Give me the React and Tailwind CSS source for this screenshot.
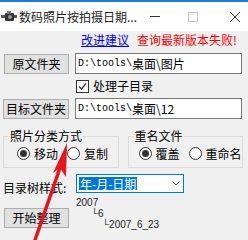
import React from 'react'

const Radio = ({ checked, label }) => (
  <div className="flex items-center gap-[4px]">
    <span className="w-[13px] h-[13px] rounded-full border border-[#333] bg-white flex items-center justify-center">
      {checked && <span className="w-[7px] h-[7px] rounded-full bg-[#333]" />}
    </span>
    <span>{label}</span>
  </div>
)

const Btn = ({ children, className = '' }) => (
  <div className={`h-[20px] bg-[#e1e1e1] border border-[#adadad] flex items-center justify-center ${className}`}>
    {children}
  </div>
)

const PathBox = ({ prefix, rest }) => (
  <div className="h-[21px] flex-1 bg-white border border-[#7a7a7a] flex items-center pl-[2px]">
    <span className="font-['Liberation_Mono',monospace] text-[10px]">{prefix}</span>
    <span>{rest}</span>
  </div>
)

export default function App() {
  return (
    <div className="w-[248px] h-[240px] relative overflow-hidden bg-[#f0f0f0] text-[12px] text-black font-['Noto_Sans_CJK_SC',sans-serif] leading-none">

      {/* title bar */}
      <div className="h-[31px] bg-white border-t-2 border-[#1a7fd4] flex items-center">
        <svg width="16" height="12" viewBox="0 0 16 12" className="ml-[1px] mr-[2px]">
          <rect x="0" y="4" width="4" height="3" fill="#555" />
          <rect x="4" y="2" width="9" height="8" rx="1" fill="#333" />
          <rect x="6" y="0" width="4" height="3" fill="#777" />
          <circle cx="9" cy="6" r="2" fill="#999" />
          <rect x="13" y="4" width="3" height="3" fill="#555" />
        </svg>
        <span className="text-[12px] text-[#222]">数码照片按拍摄日期...</span>
        <span className="ml-auto w-[10px] h-px bg-[#333] mr-[28px]" />
        <span className="w-[10px] h-[10px] border border-[#c8c8c8] mr-[32px]" />
        <svg width="10" height="10" viewBox="0 0 10 10" className="mr-[8px]">
          <path d="M0 0 L10 10 M10 0 L0 10" stroke="#333" strokeWidth="1" />
        </svg>
      </div>

      {/* links */}
      <div className="flex justify-end gap-[8px] pr-[11px] mt-[3px] h-[12px]">
        <span className="text-[#0000ff] underline">改进建议</span>
        <span className="text-[#ff0000]">查询最新版本失败!</span>
      </div>

      {/* source */}
      <div className="flex items-center pl-[4px] pr-[6px] mt-[7px] gap-[6px]">
        <Btn className="w-[65px]">原文件夹</Btn>
        <PathBox prefix="D:\tools\" rest="桌面\图片" />
      </div>

      {/* checkbox */}
      <div className="flex items-center pl-[76px] mt-[5px] gap-[4px] h-[14px]">
        <span className="w-[13px] h-[13px] border border-[#333] bg-white flex items-center justify-center">
          <svg width="9" height="9" viewBox="0 0 9 9">
            <path d="M1 4.5 L3.5 7 L8 1.5" stroke="#333" strokeWidth="1.2" fill="none" />
          </svg>
        </span>
        <span>处理子目录</span>
      </div>

      {/* target */}
      <div className="flex items-center pl-[3px] pr-[6px] mt-[5px] gap-[6px]">
        <Btn className="w-[66px]">目标文件夹</Btn>
        <PathBox prefix="D:\tools\" rest="桌面\12" />
      </div>

      {/* groups */}
      <div className="flex pl-[3px] pr-[5px] mt-[11px] gap-[9px]">
        <div className="relative w-[116px] h-[32px] mt-[6px] border border-[#dcdcdc]">
          <span className="absolute left-[5px] -top-[7px] bg-[#f0f0f0] px-[1px]">照片分类方式</span>
          <div className="flex items-center gap-[9px] pl-[13px] pt-[10px]">
            <Radio checked label="移动" />
            <Radio label="复制" />
          </div>
        </div>
        <div className="relative w-[116px] h-[32px] mt-[6px] border border-[#dcdcdc]">
          <span className="absolute left-[5px] -top-[7px] bg-[#f0f0f0] px-[1px]">重名文件</span>
          <div className="flex items-center gap-[9px] pl-[10px] pt-[10px]">
            <Radio checked label="覆盖" />
            <Radio label="重命名" />
          </div>
        </div>
      </div>

      {/* tree style */}
      <div className="flex items-start pl-[3px] mt-[6px]">
        <span className="mt-[8px] w-[73px]">目录树样式:</span>
        <div className="w-[108px] h-[19px] bg-white border border-[#0078d7] flex items-center">
          <span className="ml-[2px] bg-[#0078d7] text-white h-[13px] flex items-center px-[1px]">年-月-日期</span>
          <span className="ml-auto w-[14px] h-full flex items-center justify-center">
            <svg width="8" height="5" viewBox="0 0 8 5">
              <path d="M0.5 0.5 L4 4 L7.5 0.5" stroke="#555" fill="none" />
            </svg>
          </span>
        </div>
      </div>

      <div className="flex pl-[4px] mt-[3px]">
        <Btn className="w-[65px] mt-[11px]">开始整理</Btn>
        <div className="ml-[7px] font-['Liberation_Sans',sans-serif] text-[10px] leading-[11px] text-[#222]">
          <div>2007</div>
          <div className="pl-[15px]">└6</div>
          <div className="pl-[26px]">└2007_6_23</div>
        </div>
      </div>

      {/* red arrow overlay */}
      <svg className="absolute left-0 top-0 pointer-events-none" width="248" height="240" viewBox="0 0 248 240">
        <path d="M35 240 L61 165" stroke="#e8141b" strokeWidth="3.5" strokeLinecap="round" />
        <path d="M67 143 L53 173 L60 168 L66 177 Z" fill="#e8141b" />
      </svg>
    </div>
  )
}
